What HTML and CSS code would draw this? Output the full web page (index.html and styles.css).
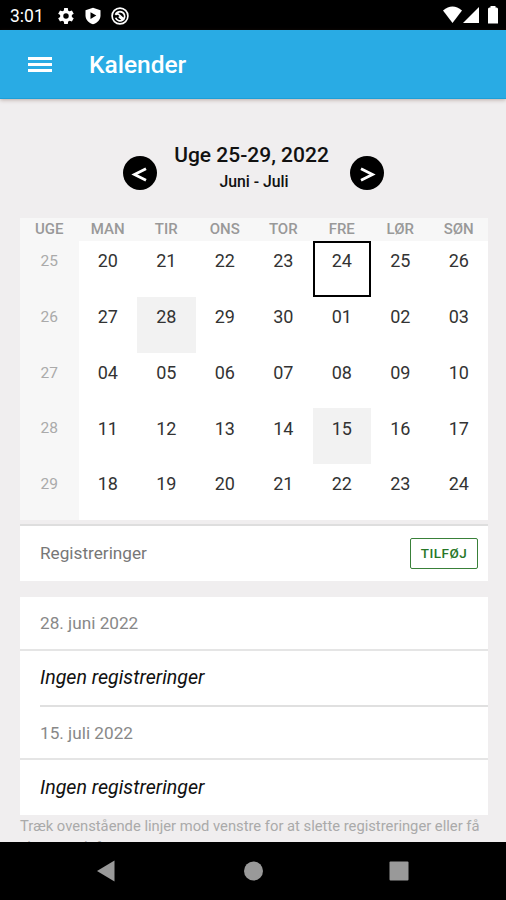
FILE: index.html
```html
<!DOCTYPE html>
<html lang="da">
<head>
  <meta charset="UTF-8">
  <meta name="viewport" content="width=device-width, initial-scale=1.0">
  <title>Kalender</title>
  <link rel="stylesheet" href="styles.css">
</head>
<body>
  <div class="statusbar">
    <span class="clock">3:01</span>
    <svg class="status-icon" width="20" height="20" viewBox="1 1 22 22"><path fill="#fff" fill-rule="evenodd" d="M18.400 13a7 7 0 0 0 0-2l2.100-1.600-2-3.500-2.500 1a7 7 0 0 0-1.700-1L14 3.200h-4l-.4 2.700a7 7 0 0 0-1.700 1l-2.500-1-2 3.500L5.600 11a7 7 0 0 0 0 2l-2.200 1.600 2 3.500 2.500-1a7 7 0 0 0 1.700 1l.4 2.700h4l.3-2.700a7 7 0 0 0 1.700-1l2.500 1 2-3.500zM12 15a3 3 0 1 1 0-6 3 3 0 0 1 0 6z"/></svg>
    <svg class="status-icon" width="20" height="20" viewBox="0 0 24 24"><path fill="#fff" d="M12 2l9 3.200v6.300c0 5-3.800 9-9 10.500-5.200-1.500-9-5.500-9-10.500V5.200z"/><path d="M9 7.500v8l7-4z"/></svg>
    <svg class="status-icon" width="20" height="20" viewBox="0 0 24 24" fill="none" stroke="#fff" stroke-width="2"><circle cx="12" cy="12" r="9.500"/><path d="M6.500 10.500c2-5 9-5 10.800 0 .8 2.500.2 4-.6 5.200L11 10.500c-1.500-1.500-3-1.200-4.500 0M6.800 14c1.200 4 6 4.800 8.400 2.800L10.500 12.800"/></svg>
    <svg class="signals" width="56" height="18" viewBox="0 0 56 18" fill="#fff"><path d="M0 4.500Q9.500-3.500 19 4.500L9.500 17z"/><path d="M36 1v16H20z"/><path d="M47.500 0h5v1.500h1q1.500 0 1.500 1.500v14.500H45V3q0-1.500 1.500-1.500h1z"/></svg>
  </div>

  <header class="navbar">
    <div class="menu"><span></span><span></span><span></span></div>
    <h1>Kalender</h1>
  </header>

  <main class="content">
    <div class="week-nav">
      <div class="arrow"><svg width="34" height="34" viewBox="0 0 34 34"><path d="M23 12.800L11.500 18.500l11.500 5.700"/></svg></div>
      <div class="week-title">
        <h2>Uge 25-29, 2022</h2>
        <p>Juni - Juli</p>
      </div>
      <div class="arrow"><svg width="34" height="34" viewBox="0 0 34 34"><path d="M11 12.800l11.500 5.700L11 24.200"/></svg></div>
    </div>

    <div class="calendar">
      <div class="head">UGE</div><div class="head">MAN</div><div class="head">TIR</div><div class="head">ONS</div><div class="head">TOR</div><div class="head">FRE</div><div class="head">LØR</div><div class="head">SØN</div>
      <div class="week">25</div><div>20</div><div>21</div><div>22</div><div>23</div><div class="today">24</div><div>25</div><div>26</div>
      <div class="week">26</div><div>27</div><div class="marked">28</div><div>29</div><div>30</div><div>01</div><div>02</div><div>03</div>
      <div class="week">27</div><div>04</div><div>05</div><div>06</div><div>07</div><div>08</div><div>09</div><div>10</div>
      <div class="week">28</div><div>11</div><div>12</div><div>13</div><div>14</div><div class="marked">15</div><div>16</div><div>17</div>
      <div class="week">29</div><div>18</div><div>19</div><div>20</div><div>21</div><div>22</div><div>23</div><div>24</div>
    </div>

    <div class="toolbar">
      <span>Registreringer</span>
      <button>TILFØJ</button>
    </div>

    <div class="list">
      <div class="date">28. juni 2022</div>
      <div class="entry"><em>Ingen registreringer</em></div>
      <div class="date">15. juli 2022</div>
      <div class="entry"><em>Ingen registreringer</em></div>
    </div>
    <p class="hint">Træk ovenstående linjer mod venstre for at slette registreringer eller få<br>vist mere info.</p>
  </main>

  <footer class="bottombar">
    <svg width="506" height="58" viewBox="0 0 506 58" fill="#999"><path d="M114.500 18.500v21L97 29z"/><circle cx="253.500" cy="29" r="9.500"/><rect x="389.500" y="19.500" width="19" height="19" rx="1"/></svg>
  </footer>
</body>
</html>
```
FILE: styles.css
```css
* {
  box-sizing: border-box;
}
body {
  margin: 0;
  height: 900px;
  display: flex;
  flex-direction: column;
  overflow: hidden;
  background: #f0eeef;
  font-family: Roboto, sans-serif;
  color: #111;
}
h1, h2, p {
  margin: 0;
}
.statusbar {
  flex: none;
  height: 30px;
  padding: 2px 7px 0 10px;
  display: flex;
  align-items: center;
  background: #000;
  color: #fff;
}
.clock {
  width: 46px;
  font-size: 17.500px;
}
.status-icon {
  margin-right: 7px;
  margin-top: -1px;
}
.signals {
  margin-left: auto;
  margin-top: -2px;
}
.navbar {
  flex: none;
  height: 69px;
  padding-left: 28px;
  display: flex;
  align-items: center;
  background: #29abe4;
  border-bottom: 1px solid #1c9fd8;
  box-shadow: 0 1px 4px rgba(90, 50, 30, 0.35);
  color: #fff;
}
.menu {
  width: 24px;
  margin-top: 1px;
  margin-right: 37px;
  display: grid;
  gap: 3px;
}
.menu span {
  height: 3px;
  background: #fff;
}
.navbar h1 {
  font-size: 24.500px;
  font-weight: 500;
}
.content {
  flex: 1;
  min-height: 0;
  overflow: hidden;
  padding: 44px 18px 0 20px;
}
.week-nav {
  height: 75px;
  display: flex;
  justify-content: center;
  padding-right: 1px;
}
.week-title {
  width: 193px;
  padding-right: 4px;
  text-align: center;
}
.week-title h2 {
  font-size: 21px;
  line-height: 25px;
  font-weight: 500;
}
.week-title p {
  margin-top: 5px;
  padding-left: 5px;
  font-size: 15.800px;
  line-height: 18px;
  font-weight: 500;
}
.arrow {
  width: 34px;
  height: 34px;
  margin-top: 13px;
  border-radius: 50%;
  background: #000;
}
.arrow svg {
  display: block;
  fill: none;
  stroke: #fff;
  stroke-width: 2.800;
}
.calendar {
  display: grid;
  grid-template-columns: repeat(8, 58.500px);
  grid-template-rows: 23px repeat(5, 55.800px);
  background: #fff;
  text-align: center;
  font-size: 18px;
  color: #333;
}
.calendar div {
  padding-top: 9.300px;
  line-height: 21px;
}
.calendar .head {
  padding-top: 1px;
  background: #f7f7f7;
  color: #999;
  font-size: 15px;
  font-weight: 500;
}
.calendar .week {
  padding-top: 11px;
  background: #f7f7f7;
  color: #aaa;
  font-size: 15.500px;
  line-height: 19px;
}
.calendar .today {
  padding-top: 7.300px;
  border: 2px solid #000;
}
.calendar .marked {
  background: #f2f2f2;
}
.toolbar {
  height: 57px;
  margin-top: 4px;
  padding: 0 10px 0 20px;
  display: flex;
  align-items: center;
  justify-content: space-between;
  background: #fff;
  border-top: 2px solid #dedede;
  font-size: 17.200px;
  color: #777;
}
.toolbar button {
  width: 68px;
  height: 31px;
  padding: 0;
  border: 1px solid #398039;
  border-radius: 2px;
  background: #fff;
  color: #277727;
  font: 500 13.500px Roboto, sans-serif;
  letter-spacing: 0.5px;
}
.list {
  margin-top: 16px;
  background: #fff;
}
.date {
  height: 54px;
  padding-left: 20px;
  line-height: 53px;
  border-bottom: 2px solid #e5e5e5;
  font-size: 17.200px;
  color: #888;
}
.entry {
  height: 56px;
  margin-left: 20px;
  line-height: 54px;
  border-bottom: 2px solid #e0e0e0;
  font-size: 19.600px;
}
.entry + .date {
  height: 53px;
  line-height: 52px;
}
.entry:last-child {
  height: 55px;
  line-height: 56px;
  border-bottom: 0;
}
.hint {
  padding-top: 1px;
  font-size: 14.750px;
  line-height: 21px;
  color: #aaa;
  white-space: nowrap;
}
.bottombar {
  flex: none;
  height: 58px;
  background: #000;
}
.bottombar svg {
  display: block;
}
```
